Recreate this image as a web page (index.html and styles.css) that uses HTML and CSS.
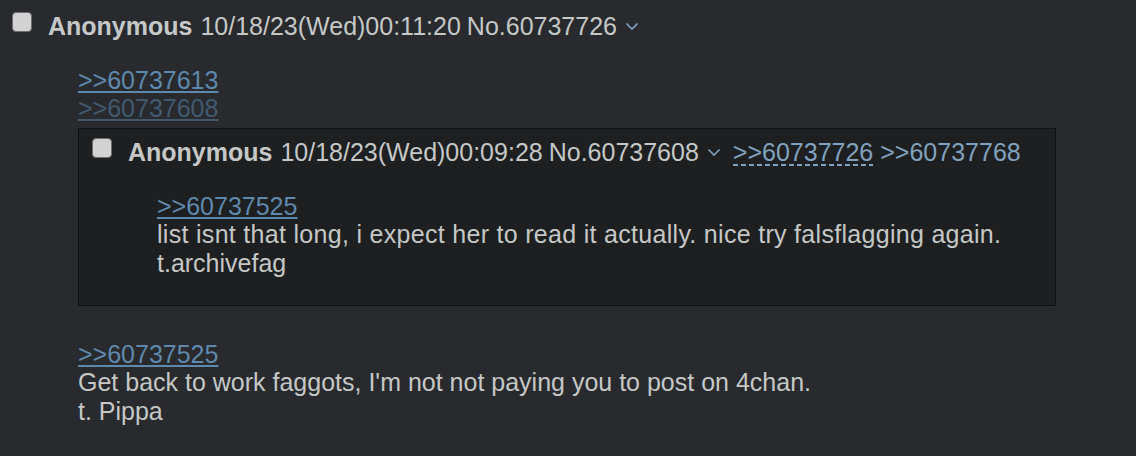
FILE: index.html
```html
<!DOCTYPE html>
<html lang="en">
<head>
  <meta charset="UTF-8">
  <meta name="viewport" content="width=device-width, initial-scale=1.0">
  <title>Thread</title>
  <link rel="stylesheet" href="styles.css">
</head>
<body>
  <div class="post">
    <div class="post-info">
      <span class="check"></span>
      <span class="name">Anonymous</span>
      <span class="date-time">10/18/23(Wed)00:11:20</span>
      <span class="post-num">No.60737726</span>
      <a class="menu-btn" href="#"><svg width="14" height="10" viewBox="0 0 14 10"><path d="M1.5 2.5l5.5 5.5 5.5-5.5" fill="none" stroke="#81a2be" stroke-width="1.6"/></svg></a>
    </div>
    <blockquote class="message">
      <a class="quotelink" href="#">&gt;&gt;60737613</a><br>
      <a class="quotelink faded" href="#">&gt;&gt;60737608</a><br>
      <div class="inline-post">
        <div class="post-info">
          <span class="check"></span>
          <span class="name">Anonymous</span>
          <span class="date-time">10/18/23(Wed)00:09:28</span>
          <span class="post-num">No.60737608</span>
          <a class="menu-btn" href="#"><svg width="14" height="10" viewBox="0 0 14 10"><path d="M1.5 2.5l5.5 5.5 5.5-5.5" fill="none" stroke="#81a2be" stroke-width="1.6"/></svg></a>
          <a class="backlink dashed" href="#">&gt;&gt;60737726</a>
          <a class="backlink" href="#">&gt;&gt;60737768</a>
        </div>
        <blockquote class="message">
          <a class="quotelink" href="#">&gt;&gt;60737525</a><br>
          <span class="wide">list isnt that long, i expect her to read it actually. nice try falsflagging again.</span><br>
          t.archivefag
        </blockquote>
      </div>
      <div class="after-inline">
        <a class="quotelink" href="#">&gt;&gt;60737525</a><br>
        Get back to work faggots, I'm not not paying you to post on 4chan.<br>
        t. Pippa
      </div>
    </blockquote>
  </div>
</body>
</html>
```

FILE: styles.css
```css
body {
  margin: 0;
  background-color: #282a2e;
  color: #c5c8c6;
  font-family: "Liberation Sans", Arial, sans-serif;
  font-size: 25px;
}

.post {
  padding: 12px 0 0 12px;
}

.post-info {
  display: flex;
  align-items: flex-start;
  white-space: nowrap;
  height: 28px;
  line-height: 28px;
}

.check {
  width: 18px;
  height: 18px;
  margin: 0 16px 0 0;
  border: 1px solid #6b6d70;
  border-radius: 4px;
  background-color: #d3d3d3;
  flex-shrink: 0;
}

.name {
  font-weight: bold;
  margin-right: 8px;
}

.date-time {
  margin-right: 6px;
}

.menu-btn {
  display: inline-flex;
  align-items: center;
  height: 28px;
  margin-left: 8px;
}

.backlink {
  color: #81a2be;
  text-decoration: none;
  margin-left: 7px;
}

.backlink.dashed {
  margin-left: 12px;
  background: repeating-linear-gradient(90deg, #81a2be 0 5px, transparent 5px 8px) 0 26px / 100% 2px no-repeat;
}

.message {
  margin: 26px 0 0 66px;
  line-height: 28.3px;
}

.quotelink {
  color: #5f89ac;
  text-decoration: underline;
}

.quotelink.faded {
  opacity: 0.5;
}

.wide {
  letter-spacing: 0.3px;
}

.inline-post {
  box-sizing: border-box;
  width: 978px;
  margin: 5px 0 0 0;
  padding: 9px 0 28px 13px;
  background-color: #1d1f21;
  border: 1px solid #111214;
}

.inline-post .message {
  margin: 26px 0 0 65px;
  line-height: 28.5px;
}

.after-inline {
  margin-top: 34px;
}
```
